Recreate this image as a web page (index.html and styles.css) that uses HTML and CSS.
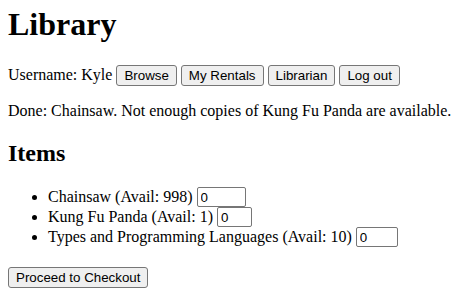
FILE: index.html
```html
<!DOCTYPE html>
<html lang="en">

<head>
    <meta charset="UTF-8" />
    <meta name="viewport" content="width=device-width, initial-scale=1.0" />
    <title>Library</title>
    <link rel="stylesheet" href="styles.css">
</head>

<body>
    <h1>Library</h1>

    <!-- User bar -->
    <p class="user-bar">
        Username: Kyle
        <button>Browse</button>
        <button>My Rentals</button>
        <button>Librarian</button>
        <button>Log out</button>
    </p>

    <p class="status">Done: Chainsaw. Not enough copies of Kung Fu Panda are available.</p>

    <h2>Items</h2>
    <ul class="items">
        <li>Chainsaw (Avail: 998) <input class="qty qty-3" type="text" value="0"></li>
        <li>Kung Fu Panda (Avail: 1) <input class="qty qty-1" type="text" value="0"></li>
        <li>Types and Programming Languages (Avail: 10) <input class="qty qty-2" type="text" value="0"></li>
    </ul>

    <button>Proceed to Checkout</button>
</body>

</html>
```

FILE: styles.css
```css
body {
    font-family: "Liberation Serif", "Times New Roman", serif;
    font-size: 16px;
    color: #000;
    background: #fff;
    margin: 0 8px 8px;
}

h1 {
    font-size: 32px;
    margin: 6px 0 22px;
}

h2 {
    font-size: 24px;
    margin: 20px 0;
}

p {
    margin: 16px 0;
}

button {
    font-family: "Liberation Sans", Arial, sans-serif;
    font-size: 13.33px;
    color: #000;
    background-color: #efefef;
    border: 1px solid #767676;
    border-radius: 3px;
    padding: 2px 7px;
    margin: 0;
}

.items {
    padding-left: 40px;
    margin: 16px 0 20px;
}

.qty {
    box-sizing: border-box;
    font-family: "Liberation Sans", Arial, sans-serif;
    font-size: 13.33px;
    height: 20px;
    padding: 1px 3px;
    border: 1px solid #767676;
    border-radius: 2px;
    margin: 0;
}

.qty-3 {
    width: 49px;
}

.qty-2 {
    width: 42px;
}

.qty-1 {
    width: 35px;
}
```
